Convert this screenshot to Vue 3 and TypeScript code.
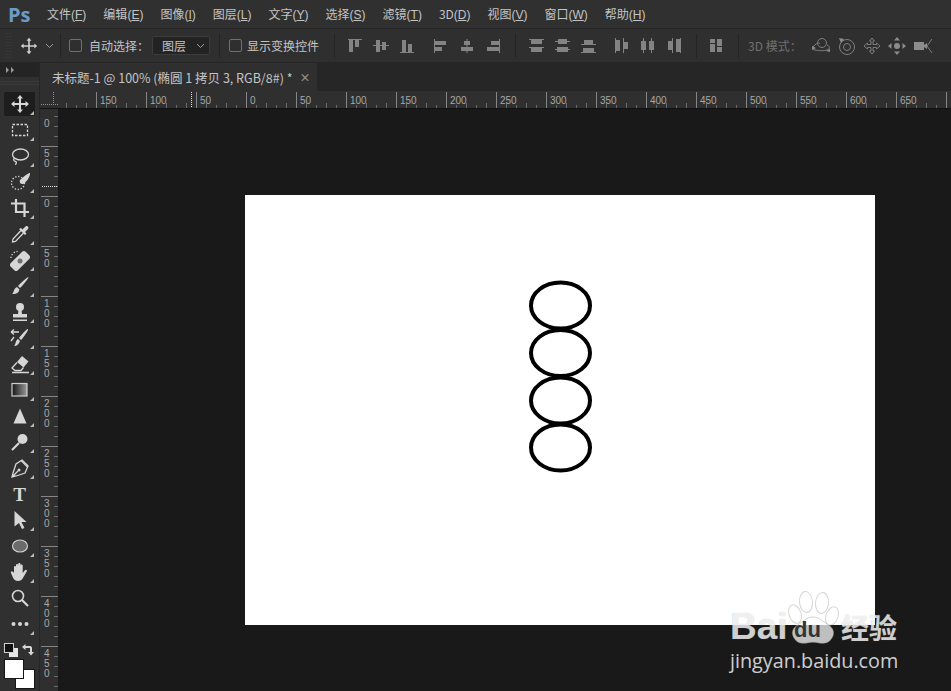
<script setup lang="ts">
type Rect = [number, number, number, number]

const menus = [
  { label: "文件", key: "F" },
  { label: "编辑", key: "E" },
  { label: "图像", key: "I" },
  { label: "图层", key: "L" },
  { label: "文字", key: "Y" },
  { label: "选择", key: "S" },
  { label: "滤镜", key: "T" },
  { label: "3D", key: "D" },
  { label: "视图", key: "V" },
  { label: "窗口", key: "W" },
  { label: "帮助", key: "H" },
]

const alignGroups: Rect[][][] = [
  [
    [[1, 1, 14, 1], [2, 2, 4, 12], [8, 2, 4, 7]],
    [[0, 7, 16, 1], [3, 2, 4, 12], [9, 4, 4, 8]],
    [[1, 14, 14, 1], [3, 2, 4, 12], [9, 6, 4, 8]],
  ],
  [
    [[1, 1, 1, 14], [2, 3, 11, 4], [2, 9, 7, 4]],
    [[7.5, 1, 1, 14], [5, 3, 6, 4], [2, 9, 12, 4]],
    [[14, 1, 1, 14], [6, 3, 8, 4], [2, 9, 12, 4]],
  ],
  [
    [[1, 1, 15, 1], [3, 2, 11, 4], [1, 9, 15, 1], [3, 10, 11, 4]],
    [[1, 3, 15, 1], [4, 1, 9, 5], [1, 11, 15, 1], [3, 9, 11, 5]],
    [[1, 6, 15, 1], [4, 2, 9, 4], [1, 14, 15, 1], [3, 10, 11, 4]],
  ],
  [
    [[1, 0, 1, 15], [2, 2, 4, 11], [9, 0, 1, 15], [10, 4, 4, 7]],
    [[3, 0, 1, 15], [1, 3, 5, 9], [11, 0, 1, 15], [9, 3, 5, 9]],
    [[6, 0, 1, 15], [2, 3, 4, 9], [14, 0, 1, 15], [10, 1, 4, 13]],
  ],
  [[[1, 1, 5, 4], [1, 6, 5, 8], [8, 1, 5, 7], [8, 9, 5, 5]]],
]

// the ruler svg starts at x=58 on the page, value 0 sits at x=246
const hMajors = Array.from({ length: 18 }, (_, i) => {
  const value = -150 + i * 50
  return { x: value + 188, label: value === 700 ? "" : String(Math.abs(value)) }
})
const hMinors = Array.from({ length: 90 }, (_, i) => ({ x: i * 10 + 8, tall: i % 2 === 0 }))

const vMajors = [
  { y: 37, label: "50" },
  { y: 87, label: "0" },
  { y: 137, label: "50" },
  { y: 187, label: "100" },
  { y: 237, label: "150" },
  { y: 287, label: "200" },
  { y: 337, label: "250" },
  { y: 387, label: "300" },
  { y: 437, label: "350" },
  { y: 487, label: "400" },
  { y: 537, label: "450" },
]
const vMinors = Array.from({ length: 60 }, (_, i) => i * 10 - 3)

const ovals = [110.5, 158, 205.5, 252.5]
</script>

<template>
  <div class="ps">
    <header class="menu">
      <div class="logo">Ps</div>
      <nav class="menu-items">
        <span v-for="m in menus" :key="m.key" class="menu-item">{{ m.label }}<small>(<u>{{ m.key }}</u>)</small></span>
      </nav>
    </header>

    <section class="options">
      <div class="grip"></div>
      <svg class="opt-move" width="18" height="18" viewBox="0 0 22 22">
        <path class="move-glyph" d="M11 1l3 3.500h-2V10h5.500V8l3.500 3-3.500 3v-2H12v5.500h2L11 21l-3-3.500h2V12H4.500v2L1 11l3.500-3v2H10V4.500H8z" />
      </svg>
      <svg class="chev" width="9" height="6" viewBox="0 0 9 6"><path d="M1 1l3.500 3.500L8 1" /></svg>
      <i class="sep first"></i>
      <label class="check auto"><i class="box"></i>自动选择：</label>
      <div class="select">图层<svg class="chev" width="9" height="6" viewBox="0 0 9 6"><path d="M1 1l3.500 3.500L8 1" /></svg></div>
      <i class="sep"></i>
      <label class="check transform"><i class="box"></i>显示变换控件</label>
      <i class="sep wide"></i>
      <template v-for="(group, g) in alignGroups" :key="g">
        <div class="align-row" :class="{ 'pair-row': g % 2 === 1 }">
          <svg v-for="(icon, n) in group" :key="n" width="16" height="16" viewBox="0 0 16 16">
            <rect v-for="(r, k) in icon" :key="k" :x="r[0]" :y="r[1]" :width="r[2]" :height="r[3]" />
          </svg>
        </div>
        <i v-if="g === 1 || g === 3" class="sep align-sep"></i>
      </template>
      <i class="sep last"></i>
      <span class="mode">3D 模式：</span>
      <div class="mode-icons">
        <svg width="20" height="18" viewBox="0 0 20 18">
          <circle cx="11" cy="6" r="4.500" />
          <path d="M2 10c2-3 5-4 7-4M16 8c2 1 3 2 2 4-2 2-10 2-14 1-2 0-2-2-2-3" />
          <path class="solid" d="M1 9l4 2-4 2zM15 14l4-2v3z" />
        </svg>
        <svg width="18" height="18" viewBox="0 0 18 18">
          <circle cx="9" cy="10" r="7.500" />
          <circle cx="9" cy="10" r="3.500" />
          <path class="solid" d="M1 1l5 1-3 4z" />
        </svg>
        <svg width="18" height="18" viewBox="0 0 18 18">
          <path d="M9 1l2.500 3H10v3.500h3.500V6L17 9l-3.500 3v-1.500H10V14h1.500L9 17l-2.500-3H8v-3.500H4.500V12L1 9l3.500-3v1.500H8V4H6.500z" />
        </svg>
        <svg width="18" height="18" viewBox="0 0 18 18">
          <circle cx="9" cy="9" r="3" class="solid" />
          <path class="solid" d="M9 0l3 3.500H6zM9 18l-3-3.500h6zM0 9l3.500-3v6zM18 9l-3.500 3V6z" />
        </svg>
        <svg width="20" height="18" viewBox="0 0 20 18">
          <rect class="solid" x="1" y="5" width="10" height="8" />
          <path class="solid" d="M11 8l3-2v6l-3-2z" />
          <path d="M19 2l-5 7 5 7" />
        </svg>
      </div>
    </section>

    <div class="work">
      <aside class="tools">
        <div class="tools-head">
          <svg width="9" height="6" viewBox="0 0 9 6"><path d="M0 0l3 3-3 3zM5 0l3 3-3 3z" /></svg>
        </div>
        <div class="tools-grip"></div>

        <div class="tool active more">
          <svg width="22" height="22" viewBox="0 0 22 22"><path class="f" d="M11 2l3 3.500h-2V10h4.500V8l3.500 3-3.500 3v-2H12v4.500h2L11 20l-3-3.500h2V12H5.500v2L2 11l3.500-3v2H10V5.500H8z" /></svg>
        </div>
        <div class="tool more">
          <svg width="22" height="22" viewBox="0 0 22 22"><rect class="s dash" x="3.500" y="5.500" width="15" height="11" /></svg>
        </div>
        <div class="tool more">
          <svg width="22" height="22" viewBox="0 0 22 22"><ellipse class="s" cx="11.500" cy="9.500" rx="8" ry="5.500" /><path class="s" d="M5.500 13c-2 2 0 3.500 1 3.500s1.500 2-.5 3" /></svg>
        </div>
        <div class="tool more">
          <svg width="22" height="22" viewBox="0 0 22 22"><circle class="s dots" cx="9" cy="12" r="6.500" /><path class="f" d="M21 2c.5 3-3.500 9-6.500 11-2.500.5-4.500-1.500-3.500-4 3-2.500 7-6.500 10-7z" /></svg>
        </div>
        <div class="tool more">
          <svg width="22" height="22" viewBox="0 0 22 22"><path class="s thick" d="M7 2v13h13M2 6.500h13.500V20" /></svg>
        </div>
        <div class="tool more">
          <svg width="22" height="22" viewBox="0 0 22 22"><path class="s" d="M12 7.500l-8 8.500-.5 3 3-.5 8-8.500" /><path class="f" d="M12 5l1.500 1.500 3-3c1.500-1.500 4 1 2.500 2.500l-3 3L17.500 10.500 16 12l-6-6z" /></svg>
        </div>
        <div class="tool more">
          <svg width="22" height="22" viewBox="0 0 22 22">
            <rect class="f" x="0.500" y="7" width="21" height="10" rx="2.500" transform="rotate(-45 11 12)" />
            <circle class="hole" cx="11" cy="12" r="2.500" />
            <path class="s dots" d="M2 9c0-3 3-6.500 6.500-6.500" />
          </svg>
        </div>
        <div class="tool more">
          <svg width="22" height="22" viewBox="0 0 22 22"><path class="f" d="M19.500 2c.5.500-5 8-8.500 11l-2-2c3-3.500 10-9.500 10.500-9zM8 12l2.500 2.500c-1 4-4 5-7.500 4.500 2-1 1.500-5.500 5-7z" /></svg>
        </div>
        <div class="tool more">
          <svg width="22" height="22" viewBox="0 0 22 22"><circle class="f" cx="11" cy="6" r="4" /><path class="f" d="M9.500 9h3l.5 4h5v3.500H4V13h5zM4 18.500h14V20H4z" /></svg>
        </div>
        <div class="tool more">
          <svg width="22" height="22" viewBox="0 0 22 22"><path class="f" d="M19 2c1 .5-4 8-7 11l-2-2c2.500-3.500 8-9.500 9-9zM9 12l2 2c-1 3-3 5-6 5 2-2 1.500-6 4-7z" /><path class="s" d="M2 5h8M2 5l3-2.500M2 5l3 2.500M5 10l-3 4" /></svg>
        </div>
        <div class="tool more">
          <svg width="22" height="22" viewBox="0 0 22 22"><path class="f" d="M13 3l6.500 5.500-5 6-6.500-5.500z" /><path class="s" d="M8 9.500l-5 5.500 3 2.500h6l2.500-3M3 19.500h17" /></svg>
        </div>
        <div class="tool more">
          <svg width="22" height="22" viewBox="0 0 22 22">
            <defs><linearGradient id="fade"><stop offset="0" stop-color="#151515" /><stop offset="1" stop-color="#9a9a9a" /></linearGradient></defs>
            <rect x="3" y="4.500" width="15" height="12.500" fill="url(#fade)" stroke="#cfcfcf" stroke-width="1.200" />
          </svg>
        </div>
        <div class="tool more">
          <svg width="22" height="22" viewBox="0 0 22 22"><path class="f" d="M11 3.500l6.500 15h-13z" /></svg>
        </div>
        <div class="tool more">
          <svg width="22" height="22" viewBox="0 0 22 22"><circle class="f" cx="13.500" cy="8" r="5" /><path class="s thick" d="M10 12l-7 7" /></svg>
        </div>
        <div class="tool more">
          <svg width="22" height="22" viewBox="0 0 22 22"><path class="s" d="M13 3l6 6-3 7-9 3-4 1 1-4 3-9zM3 20l6-6" /><path class="s" d="M12 3.500l7 7" /><circle class="f" cx="10" cy="13" r="1.500" /></svg>
        </div>
        <div class="tool"><span class="type-t">T</span></div>
        <div class="tool more">
          <svg width="22" height="22" viewBox="0 0 22 22"><path class="f" d="M5.500 2l12 11h-5l3 6-2.500 1-3-6-4.500 3.500z" /></svg>
        </div>
        <div class="tool more">
          <svg width="22" height="22" viewBox="0 0 22 22"><ellipse cx="11" cy="11" rx="7.500" ry="6" fill="#6b6b6b" stroke="#cfcfcf" stroke-width="1.200" /></svg>
        </div>
        <div class="tool more">
          <svg width="22" height="22" viewBox="0 0 22 22"><path class="f" d="M5 12V6c0-1.500 2-1.500 2 0v3V4c0-1.500 2.200-1.500 2.200 0v5V3c0-1.500 2.300-1.500 2.300 0v6V4.500c0-1.500 2.200-1.500 2.200 0V12l2-2.500c1-1.500 3-.5 2 1l-3.500 6c-1 2-2.500 3.500-5 3.500-3 0-4.500-1.500-5.500-4L2 12c-.7-1.500 1-2.500 2-1.200z" /></svg>
        </div>
        <div class="tool">
          <svg width="22" height="22" viewBox="0 0 22 22"><circle class="s thick2" cx="9" cy="9" r="5.500" /><path class="s thick" d="M13 13l6 6" /></svg>
        </div>
        <div class="tool more">
          <svg width="22" height="22" viewBox="0 0 22 22"><circle class="f" cx="4.500" cy="11" r="2" /><circle class="f" cx="11" cy="11" r="2" /><circle class="f" cx="17.500" cy="11" r="2" /></svg>
        </div>

        <div class="swatches">
          <i class="mini-back"></i>
          <i class="mini-front"></i>
          <svg class="swap" width="12" height="12" viewBox="0 0 12 12"><path class="f" d="M0 3l3.500-3v2H8c1.500 0 2 1 2 2v4h2l-3 3.500L6 8h2V4H3.500v2z" /></svg>
          <i class="bg-swatch"></i>
          <i class="fg-swatch"></i>
        </div>
      </aside>

      <main class="doc-area">
        <div class="tabs">
          <div class="tab">未标题-1 @ 100% (椭圆 1 拷贝 3, RGB/8#) *<span class="tab-x">×</span></div>
        </div>

        <div class="ruler-top">
          <svg class="corner" width="18" height="17" viewBox="0 0 18 17">
            <path class="corner-mark" d="M13.500 1V13M1 13.500H18" />
          </svg>
          <svg class="ruler-h" width="893" height="17" viewBox="0 0 893 17">
            <path v-for="t in hMinors" :key="t.x" class="tick" :d="`M${t.x + 0.5} ${t.tall ? 12 : 14}V17`" />
            <template v-for="t in hMajors" :key="t.x">
              <path class="tick major" :d="`M${t.x + 0.5} 1V17`" />
              <text v-if="t.label" class="rule-num" :x="t.x + 4" y="13">{{ t.label }}</text>
            </template>
            <path class="cursor" d="M133.500 1V17" />
          </svg>
        </div>

        <div class="below">
          <svg class="ruler-v" width="18" height="583" viewBox="0 0 18 583">
            <path v-for="y in vMinors" :key="y" class="tick" :d="`M14 ${y + 0.5}H18`" />
            <template v-for="t in vMajors" :key="t.y">
              <path class="tick major" :d="`M1 ${t.y + 0.5}H18`" />
              <text v-for="(c, i) in t.label.split('')" :key="i" class="rule-num" x="4" :y="t.y + 11 + i * 10">{{ c }}</text>
            </template>
            <text class="rule-num" x="4" y="18">0</text>
            <path class="cursor" d="M2 77.500H18" />
          </svg>

          <div class="canvas">
            <svg class="doc" width="630" height="430" viewBox="0 0 630 430">
              <ellipse v-for="cy in ovals" :key="cy" cx="315.500" :cy="cy" rx="29.500" ry="23" />
            </svg>
          </div>
        </div>
      </main>
    </div>

    <div class="mark">
      <svg class="paw" width="56" height="56" viewBox="0 0 56 56">
        <ellipse cx="10" cy="25" rx="6" ry="9.500" transform="rotate(-20 10 25)" />
        <ellipse cx="21" cy="13" rx="6.500" ry="10.500" transform="rotate(-5 21 13)" />
        <ellipse cx="37" cy="14" rx="6.500" ry="10.500" transform="rotate(5 37 14)" />
        <ellipse cx="47" cy="27" rx="6" ry="9.500" transform="rotate(20 47 27)" />
        <path d="M28 28c6 0 9 4 14 7 7 4 8 9 5 14-3 5-8 6-13 5-4-1-8-1-12 0-5 1-10 0-13-5-3-5-2-10 5-14 5-3 8-7 14-7z" />
      </svg>
      <div class="brand">
        <span class="bai">Bai</span><span class="du">du</span><span class="cn">经验</span>
      </div>
      <div class="site">jingyan.baidu.com</div>
    </div>
  </div>
</template>

<style>
html,
body {
  margin: 0;
  background: #191919;
}
</style>

<style scoped>
.ps {
  position: relative;
  width: 951px;
  height: 691px;
  overflow: hidden;
  display: flex;
  flex-direction: column;
  background: #191919;
  color: #c4c4c4;
  font-family: "Noto Sans CJK SC", "Liberation Sans", sans-serif;
  font-size: 12px;
}

.menu {
  height: 28px;
  flex: none;
  display: flex;
  align-items: center;
  background: #303030;
}

.logo {
  width: 47px;
  padding-left: 8px;
  box-sizing: border-box;
  font-family: "Open Sans", sans-serif;
  font-weight: 700;
  font-size: 20px;
  color: #6c9bc8;
}

.menu-items {
  display: flex;
  gap: 17px;
}

.menu-item {
  white-space: nowrap;
  line-height: 28px;
}

.menu-item small {
  font-size: 12px;
  font-family: "Liberation Sans", sans-serif;
}

.options {
  height: 35px;
  flex: none;
  box-sizing: border-box;
  display: flex;
  align-items: center;
  background: #2f2f2f;
  border-top: 1px solid #262626;
  border-bottom: 1px solid #262626;
  padding-left: 5px;
}

.grip {
  width: 7px;
  height: 26px;
  margin-right: 8px;
  opacity: 0.5;
  background: repeating-linear-gradient(#3c3c3c 0 1px, transparent 1px 3px);
}

.opt-move {
  margin-right: 7px;
}

.move-glyph {
  fill: #cfcfcf;
}

.chev {
  fill: none;
  stroke: #9c9c9c;
  stroke-width: 1;
}

.sep {
  width: 1px;
  height: 24px;
  margin: 0 9px;
  background: #242424;
}

.sep.first {
  margin: 0 8px 0 6px;
}

.sep.wide {
  margin: 0 12px 0 15px;
}

.sep.last {
  margin: 0 9px 0 13px;
}

.check {
  display: flex;
  align-items: center;
  color: #c4c4c4;
  white-space: nowrap;
}

.box {
  width: 11px;
  height: 11px;
  border: 1px solid #707070;
  border-radius: 2px;
}

.auto {
  margin-right: 3px;
}

.auto .box {
  margin-right: 7px;
}

.transform .box {
  margin-right: 5px;
}

.select {
  width: 58px;
  height: 19px;
  box-sizing: border-box;
  display: flex;
  align-items: center;
  justify-content: space-between;
  padding: 0 4px 0 9px;
  background: #232323;
  border: 1px solid #3c3c3c;
  border-radius: 2px;
}

.align-row {
  display: flex;
  gap: 10px;
}

.pair-row {
  margin-left: 18px;
}

.align-row svg {
  fill: #838383;
}

.align-sep {
  margin: 0 12px 0 14px;
}

.mode {
  color: #6f6f6f;
  white-space: nowrap;
}

.mode-icons {
  display: flex;
  align-items: center;
  gap: 7px;
  margin-left: 9px;
}

.mode-icons svg {
  fill: none;
  stroke: #7e7e7e;
  stroke-width: 1;
}

.mode-icons .solid {
  fill: #8c8c8c;
  stroke: none;
}

.work {
  flex: 1;
  min-height: 0;
  display: flex;
}

.tools {
  width: 40px;
  flex: none;
  box-sizing: border-box;
  background: #303030;
  border-right: 1px solid #262626;
  position: relative;
}

.tools-head {
  height: 14px;
  padding: 4px 0 0 6px;
  box-sizing: border-box;
  background: #242424;
  line-height: 0;
}

.tools-head svg {
  fill: #9a9a9a;
}

.tools-grip {
  height: 14px;
  background: repeating-linear-gradient(#3a3a3a 0 1px, transparent 1px 3px);
  background-size: 100% 6px;
  background-position: 0 4px;
  background-repeat: no-repeat;
}

.tool {
  position: relative;
  width: 39px;
  height: 26px;
  display: flex;
  align-items: center;
  justify-content: center;
}

.tool.active::before {
  content: "";
  position: absolute;
  left: 4px;
  top: 1px;
  width: 31px;
  height: 24px;
  background: #1d1d1d;
  border-radius: 2px;
}

.tool svg {
  position: relative;
}

.tool.more::after {
  content: "";
  position: absolute;
  right: 5px;
  bottom: 2px;
  border-style: solid;
  border-width: 0 0 4px 4px;
  border-color: transparent transparent #b9b9b9 transparent;
}

.f {
  fill: #d6d6d6;
}

.s {
  fill: none;
  stroke: #d6d6d6;
  stroke-width: 1.300;
}

.thick {
  stroke-width: 2.200;
}

.thick2 {
  stroke-width: 1.600;
}

.dash {
  stroke-dasharray: 2.500 1.500;
}

.dots {
  stroke-dasharray: 1.300 1.700;
}

.hole {
  fill: #6f6f6f;
}

.type-t {
  font-family: "Liberation Serif", serif;
  font-weight: 700;
  font-size: 19px;
  color: #d8d8d8;
  line-height: 1;
}

.swatches {
  position: relative;
  height: 60px;
}

.swatches i {
  position: absolute;
  display: block;
}

.mini-back {
  left: 9px;
  top: 11px;
  width: 9px;
  height: 9px;
  background: #e6e6e6;
}

.mini-front {
  left: 4px;
  top: 6px;
  width: 8px;
  height: 8px;
  background: #111;
  border: 1px solid #d0d0d0;
}

.swap {
  position: absolute;
  left: 22px;
  top: 7px;
}

.bg-swatch {
  left: 15px;
  top: 32px;
  width: 18px;
  height: 18px;
  background: #fff;
  border: 1px solid #161616;
}

.fg-swatch {
  left: 4px;
  top: 22px;
  width: 18px;
  height: 18px;
  background: #fff;
  border: 1px solid #161616;
}

.doc-area {
  flex: 1;
  min-width: 0;
  display: flex;
  flex-direction: column;
}

.tabs {
  height: 28px;
  flex: none;
  background: #262626;
}

.tab {
  width: 277px;
  height: 28px;
  box-sizing: border-box;
  padding-left: 12px;
  display: flex;
  align-items: center;
  background: #2f2f2f;
  color: #c4c4c4;
  font-size: 12.500px;
  white-space: nowrap;
}

.tab-x {
  margin-left: 7px;
  font-size: 11px;
  font-weight: 700;
  color: #8f8f8f;
}

.ruler-top {
  height: 17px;
  flex: none;
  display: flex;
  background: #2f2f2f;
  border-bottom: 1px solid #111;
}

.corner {
  display: block;
  flex: none;
}

.corner-mark {
  fill: none;
  stroke: #8f8f8f;
  stroke-dasharray: 1 1;
}

.ruler-h,
.ruler-v {
  display: block;
  flex: none;
}

.tick {
  fill: none;
  stroke: #6b6b6b;
  stroke-width: 1;
}

.tick.major {
  stroke: #858585;
}

.cursor {
  fill: none;
  stroke: #e0e0e0;
  stroke-dasharray: 1 1;
}

.rule-num {
  font-family: "Liberation Sans", sans-serif;
  font-size: 10px;
  fill: #a8a8a8;
}

.below {
  flex: 1;
  min-height: 0;
  display: flex;
}

.ruler-v {
  background: #2f2f2f;
}

.canvas {
  flex: 1;
  min-width: 0;
  padding: 86px 0 0 187px;
  background: #191919;
}

.doc {
  display: block;
  background: #fff;
}

.doc ellipse {
  fill: none;
  stroke: #000;
  stroke-width: 4;
}

/* watermark sits over the document corner */
.mark {
  position: absolute;
  left: 728px;
  top: 588px;
  width: 175px;
  height: 84px;
  color: rgba(255, 255, 255, 0.75);
  font-family: "Liberation Sans", sans-serif;
}

.paw {
  position: absolute;
  left: 57px;
  top: 1px;
  fill: rgba(255, 255, 255, 0.72);
  stroke: rgba(150, 150, 150, 0.4);
  stroke-width: 1;
}

.brand {
  position: absolute;
  left: 2px;
  top: 21px;
  height: 36px;
  line-height: 36px;
  white-space: nowrap;
  text-shadow: 0 0 1px rgba(120, 120, 120, 0.45);
}

.bai {
  font-weight: 700;
  font-size: 37px;
}

.du {
  position: absolute;
  left: 64px;
  top: 3px;
  font-weight: 700;
  font-size: 22px;
  color: #333;
  text-shadow: none;
}

.cn {
  position: absolute;
  left: 111px;
  top: 0;
  font-family: "Noto Sans CJK SC", sans-serif;
  font-weight: 700;
  font-size: 28px;
}

.site {
  position: absolute;
  left: 2px;
  top: 59px;
  font-size: 19.800px;
  font-family: "Open Sans", sans-serif;
  white-space: nowrap;
  color: rgba(255, 255, 255, 0.8);
}
</style>
